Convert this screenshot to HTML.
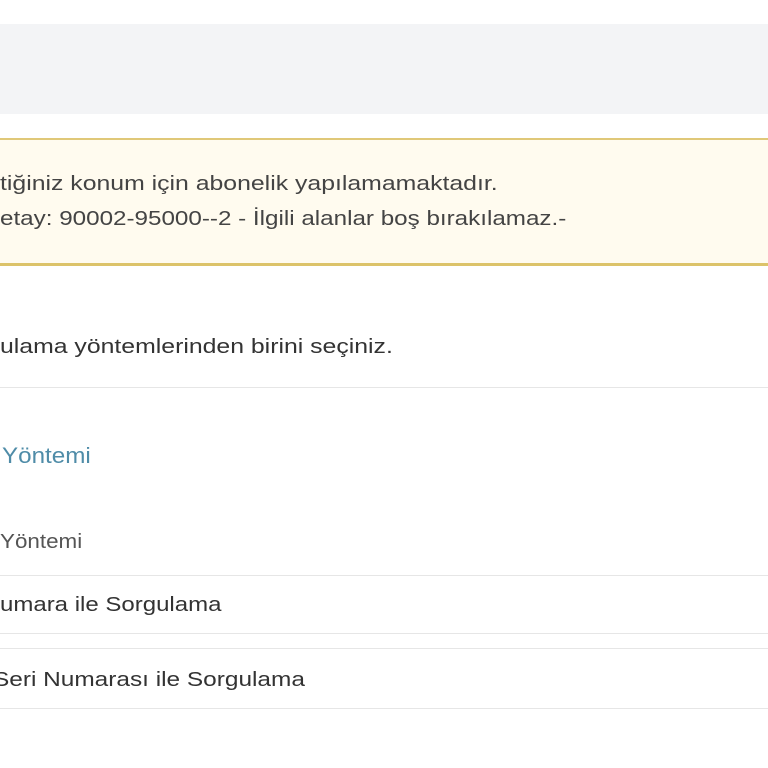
<!DOCTYPE html>
<html><head><meta charset="utf-8"><style>
body{margin:0;width:768px;height:768px;background:#fff;position:relative;overflow:hidden;font-family:"Liberation Sans",sans-serif;color:#444}
.t{position:absolute;white-space:nowrap;font-size:20px;line-height:24px;transform:scaleX(1.22);transform-origin:0 0}
.ln{position:absolute;left:0;width:768px;height:1px;background:#e6e6e6}
</style></head><body>
<div style="position:absolute;left:0;top:24px;width:768px;height:90px;background:#f3f4f6"></div>
<div style="position:absolute;left:0;top:138px;width:768px;height:123px;background:#fffbef;border-top:2px solid #e0c878;border-bottom:3px solid #dcc36a"></div>
<div class="t" style="left:0;top:172px;transform:scaleX(1.24)">tiğiniz konum için abonelik yapılamamaktadır.</div>
<div class="t" style="left:0;top:207px;transform:scaleX(1.21)">etay: 90002-95000--2 - İlgili alanlar boş bırakılamaz.-</div>
<div class="t" style="left:0;top:335px;color:#333;transform:scaleX(1.24)">ulama yöntemlerinden birini seçiniz.</div>
<div class="ln" style="top:387px"></div>
<div class="t" style="left:2px;top:444px;font-size:22px;color:#4f8ca8;transform:scaleX(1.1)">Yöntemi</div>
<div class="t" style="left:0;top:530px;color:#555;transform:scaleX(1.12)">Yöntemi</div>
<div class="ln" style="top:575px"></div>
<div class="t" style="left:0;top:593px;color:#333;transform:scaleX(1.2)">umara ile Sorgulama</div>
<div class="ln" style="top:633px"></div>
<div class="ln" style="top:648px"></div>
<div class="t" style="left:-7px;top:668px;color:#333;transform:scaleX(1.22)">Seri Numarası ile Sorgulama</div>
<div class="ln" style="top:708px"></div>
</body></html>
